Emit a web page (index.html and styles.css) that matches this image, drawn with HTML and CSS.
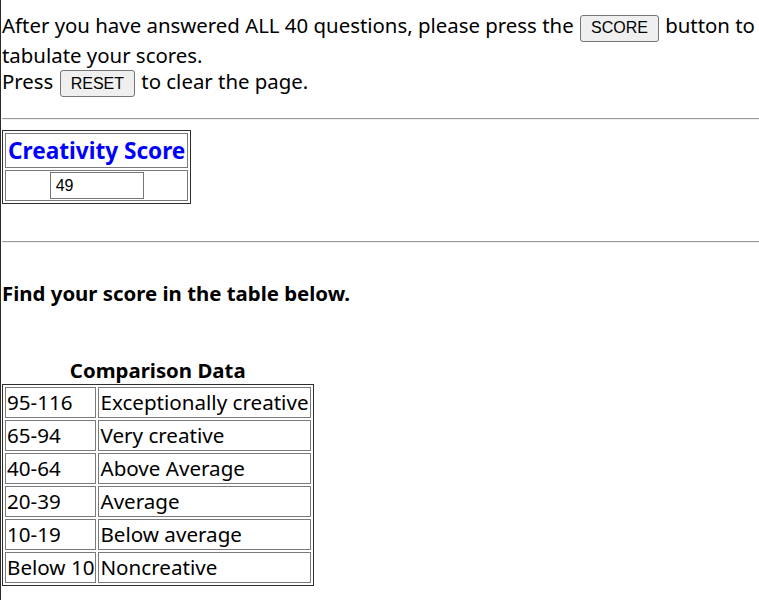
FILE: index.html
```html
<!DOCTYPE html>
<html>
<head>
<meta charset="utf-8">
<title>Creativity Score</title>
<link rel="stylesheet" href="styles.css">
</head>
<body>
<p class="intro">After you have answered ALL 40 questions, please press the <button class="btn" type="button">SCORE</button> button to<br>tabulate your scores.<br>Press <button class="btn" type="button">RESET</button> to clear the page.</p>
<hr class="rule rule-first">
<table class="score">
  <tr><th class="score-head">Creativity Score</th></tr>
  <tr><td class="score-cell"><input class="score-input" type="text" value="49"></td></tr>
</table>
<hr class="rule rule-second">
<p class="find">Find your score in the table below.</p>
<table class="cmp">
  <caption class="cmp-caption">Comparison Data</caption>
  <tr><td>95-116</td><td>Exceptionally creative</td></tr>
  <tr><td>65-94</td><td>Very creative</td></tr>
  <tr><td>40-64</td><td>Above Average</td></tr>
  <tr><td>20-39</td><td>Average</td></tr>
  <tr><td>10-19</td><td>Below average</td></tr>
  <tr><td>Below 10</td><td>Noncreative</td></tr>
</table>
</body>
</html>
```
FILE: styles.css
```css
html, body {
  background: #ffffff;
}
body {
  margin: 0;
  padding: 0 0 0 1px;
  border-left: 1px solid #2b2b2b;
  min-height: 100vh;
  box-sizing: border-box;
  font-family: "Noto Sans", "Open Sans", sans-serif;
  font-size: 20.4px;
  color: #000000;
  overflow: hidden;
}
.intro {
  margin: 12px 0 0 0;
  line-height: 26px;
  white-space: nowrap;
}
.btn {
  font-family: "Liberation Sans", Arial, sans-serif;
  font-size: 16px;
  color: #000000;
  background: #efefef;
  border: 1px solid #767676;
  border-radius: 3px;
  height: 27px;
  padding: 0 10px;
  margin: 0 1px;
  box-sizing: border-box;
  vertical-align: baseline;
}
.rule {
  display: block;
  height: 0;
  border: 0;
  border-top: 1px solid #9a9a9a;
  border-bottom: 1px solid #eeeeee;
  margin: 0;
}
.rule-first {
  margin-top: 21px;
}
.rule-second {
  margin-top: 37px;
}
.score {
  margin-top: 10px;
  border: 1px solid #2e2e2e;
  border-spacing: 2px;
}
.score-head {
  font-size: 22.6px;
  font-weight: bold;
  line-height: 31px;
  color: #0000ff;
  border: 1px solid #7a7a7a;
  padding: 1px 2px;
  white-space: nowrap;
}
.score-cell {
  border: 1px solid #7a7a7a;
  padding: 1px 1px 1px;
}
.score-input {
  display: block;
  margin: 0 auto;
  width: 94px;
  height: 27px;
  box-sizing: border-box;
  border: 1px solid #767676;
  padding: 0 5px;
  font-family: "Liberation Sans", Arial, sans-serif;
  font-size: 16px;
  color: #000000;
  background: #ffffff;
}
.find {
  margin: 36px 0 0 0;
  font-weight: bold;
}
.cmp {
  margin-top: 49px;
  border: 1px solid #2e2e2e;
  border-spacing: 2px;
}
.cmp-caption {
  font-weight: bold;
  text-align: center;
}
.cmp td {
  border: 1px solid #7a7a7a;
  padding: 1px;
  font-size: 20.6px;
  line-height: 27px;
  white-space: nowrap;
}
```
